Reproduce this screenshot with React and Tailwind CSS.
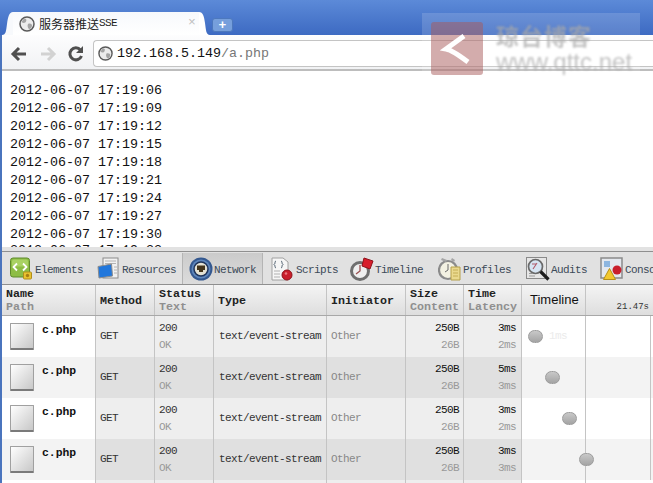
import React from "react";

const mono = "font-['Liberation_Mono','DejaVu_Sans_Mono',monospace]";

const times = ["17:19:06", "17:19:09", "17:19:12", "17:19:15", "17:19:18", "17:19:21", "17:19:24", "17:19:27", "17:19:30", "17:19:33"];

const rows = [
  { time: "3ms", latency: "2ms", dot: "ml-[6px]", faint: true },
  { time: "5ms", latency: "3ms", dot: "ml-[23px]" },
  { time: "3ms", latency: "2ms", dot: "ml-[40px]" },
  { time: "3ms", latency: "3ms", dot: "ml-[57px]" },
];

const Globe = ({ size = 16 }) => (
  <svg width={size} height={size} viewBox="0 0 16 16" className="shrink-0">
    <circle cx="8" cy="8" r="7" fill="#ececec" stroke="#5a5a5a" strokeWidth="1.5" />
    <path d="M5 2.5c2 0 3 1 2 3S4 7 2.5 6M9 8c2-1 4.5 0 4 2s-2 3.5-3 3-2-3-1-5z" fill="#a4a4a4" />
  </svg>
);

const ElementsIcon = () => (
  <svg width="24" height="24" viewBox="0 0 24 24" className="shrink-0">
    <rect x="0.5" y="1" width="19" height="19" rx="2.5" fill="#8dbd45" stroke="#5f8a2c" />
    <rect x="2" y="2.5" width="16" height="7" rx="2" fill="#a9d264" />
    <path d="M7 6.5L3.5 10 7 13.500M13 6.500L16.500 10 13 13.500" fill="none" stroke="#fff" strokeWidth="1.8" />
    <rect x="13.500" y="15" width="8" height="7" rx="1" fill="#e9c22f" stroke="#b08d1c" />
    <circle cx="17.500" cy="18.500" r="1.700" fill="#a87d12" />
  </svg>
);

const ResourcesIcon = () => (
  <svg width="24" height="24" viewBox="0 0 24 24" className="shrink-0">
    <rect x="6" y="1" width="15" height="20" fill="#f1f1f1" stroke="#8c8c8c" />
    <path d="M8 4h11M8 6.500h11" stroke="#b4b4b4" />
    <path d="M1 9.500l13.500-2.500 1 12L2 21z" fill="#2177dc" stroke="#8c8c8c" />
    <path d="M17 10h3M17 13h3M17 16h3" stroke="#b4b4b4" />
  </svg>
);

const NetworkIcon = () => (
  <svg width="24" height="24" viewBox="0 0 24 24" className="shrink-0">
    <circle cx="12" cy="12" r="11.500" fill="#34588f" />
    <circle cx="12" cy="12" r="9.500" fill="#5d86bd" />
    <circle cx="12" cy="12" r="7" fill="#e4e2d4" stroke="#1f345a" strokeWidth="1.500" />
    <path d="M8 8.500h8v4.500h-2v2h-4v-2H8z" fill="#43341c" />
  </svg>
);

const ScriptsIcon = () => (
  <svg width="24" height="24" viewBox="0 0 24 24" className="shrink-0">
    <path d="M1 1h11l5 4v18H1z" fill="#f6f6f6" stroke="#a0a0a0" />
    <path d="M5 4C3.500 4 4.500 7 3 7.500 4.500 8 3.500 11 5 11M10 4c1.500 0 .5 3 2 3.500-1.500.5-.5 3.500-2 3.500" fill="none" stroke="#4a5a6a" />
    <path d="M3 14h6M3 17h6M3 20h6" stroke="#b0b0b0" />
    <circle cx="16" cy="18" r="5" fill="#c91f2c" stroke="#8e1119" />
    <circle cx="15" cy="16.500" r="1.300" fill="#ea7a80" />
  </svg>
);

const TimelineIcon = () => (
  <svg width="24" height="24" viewBox="0 0 24 24" className="shrink-0">
    <circle cx="10" cy="14" r="8.500" fill="#efefef" stroke="#6f6f6f" strokeWidth="3" />
    <path d="M10 8v6l-4 3" fill="none" stroke="#9a5050" strokeWidth="1.300" />
    <path d="M12 9l2-8 9 3-3 8z" fill="#d81e2c" stroke="#8e1119" />
  </svg>
);

const ProfilesIcon = () => (
  <svg width="24" height="24" viewBox="0 0 24 24" className="shrink-0">
    <circle cx="10" cy="13" r="9" fill="#f3f1e2" stroke="#8b8b8b" strokeWidth="2.200" />
    <path d="M4 1l5 2-1 2-5-2zM14 1l3 2-1 2-3-2z" fill="#a4a4a4" />
    <path d="M10 7v6l-3 2" fill="none" stroke="#6a6a6a" />
    <path d="M13 10h9v13h-9z" fill="#ead98d" stroke="#b5a04a" />
    <path d="M15 13h5M15 16h5M15 19h5" stroke="#c4ad55" />
  </svg>
);

const AuditsIcon = () => (
  <svg width="24" height="24" viewBox="0 0 24 24" className="shrink-0">
    <rect x="0.500" y="0.500" width="20" height="21" fill="#e6e6e6" stroke="#8a8a8a" />
    <path d="M3 19h6M3 16.500h3" stroke="#999" />
    <circle cx="9.500" cy="9.500" r="7" fill="#d6e4f2" stroke="#6a6a6a" strokeWidth="1.700" />
    <path d="M7 12l4-6M6 7h4" stroke="#b05a6a" strokeWidth="1.100" />
    <path d="M14.500 14.500L22.500 22.500" stroke="#1d1d1d" strokeWidth="3.200" />
  </svg>
);

const ConsoleIcon = () => (
  <svg width="24" height="24" viewBox="0 0 24 24" className="shrink-0">
    <rect x="1" y="1" width="21" height="20" fill="#e4e8ee" stroke="#8a8a8a" strokeWidth="1.500" />
    <rect x="4" y="4" width="6" height="6" fill="#8db6e0" />
    <path d="M3.500 22.500l6-11 6 11z" fill="#f2c82e" stroke="#b68f18" />
    <circle cx="17" cy="13" r="4.500" fill="#c91f2c" />
  </svg>
);

const tabs = [
  { label: "Elements", icon: <ElementsIcon />, cls: "w-[86px] pl-[10px]" },
  { label: "Resources", icon: <ResourcesIcon />, cls: "w-[96px] pl-[11px]" },
  { label: "Network", icon: <NetworkIcon />, cls: "w-[81px] pl-[6px] bg-gradient-to-b from-[#cbcbcb] to-[#dcdcdc] border-x border-[#b4b4b4]" },
  { label: "Scripts", icon: <ScriptsIcon />, cls: "w-[82px] pl-[8px]" },
  { label: "Timeline", icon: <TimelineIcon />, cls: "w-[88px] pl-[5px]" },
  { label: "Profiles", icon: <ProfilesIcon />, cls: "w-[88px] pl-[5px]" },
  { label: "Audits", icon: <AuditsIcon />, cls: "w-[74px] pl-[5px]" },
  { label: "Console", icon: <ConsoleIcon />, cls: "w-[58px] pl-[5px]" },
];

const cols = "grid grid-cols-[96px_59px_59px_113px_79px_58px_58px_64px_1fr]";
const cellLine = "border-r border-[#c4c4c4]";
const small = "text-[11px] tracking-[-0.6px]";

const HeaderCell = ({ top, bottom, cls = "pl-[4px]" }) => (
  <div className={`flex flex-col justify-center ${cls} pt-[2px] text-[11.67px] leading-[13px] font-bold text-[#222] ${cellLine}`}>
    <span>{top}</span>
    {bottom && <span className="text-[#8f8f8f]">{bottom}</span>}
  </div>
);

const Row = ({ row, odd }) => {
  const tone = odd ? "bg-[#e0e0e0]" : "bg-[#eeeeee]";
  const light = odd ? "bg-[#f3f3f3]" : "bg-white";
  return (
    <div className={`${cols} h-[41px] ${small} text-[#333]`}>
      <div className={`${light} ${cellLine} flex pl-[10px] pt-[7px]`}>
        <div className="w-[24px] h-[27px] bg-gradient-to-br from-white to-[#c8c8c8] border border-[#a0a0a0] border-b-2 border-b-[#7a7a7a] rounded-[1px]" />
        <span className="ml-[8px] text-[11.4px] tracking-normal font-bold text-[#111] leading-[14px]">c.php</span>
      </div>
      <div className={`${tone} ${cellLine} flex items-center px-[4px]`}>GET</div>
      <div className={`${tone} ${cellLine} flex flex-col justify-center px-[4px] leading-[17px]`}>
        <span>200</span>
        <span className="text-[#999]">OK</span>
      </div>
      <div className={`${tone} ${cellLine} flex items-center px-[5px] whitespace-nowrap`}>text/event-stream</div>
      <div className={`${tone} ${cellLine} flex items-center px-[4px] text-[#888]`}>Other</div>
      <div className={`${tone} ${cellLine} flex flex-col justify-center items-end px-[4px] leading-[17px]`}>
        <span className="text-[#111]">250B</span>
        <span className="text-[#999]">26B</span>
      </div>
      <div className={`${tone} ${cellLine} flex flex-col justify-center items-end px-[5px] leading-[17px]`}>
        <span className="text-[#111]">{row.time}</span>
        <span className="text-[#999]">{row.latency}</span>
      </div>
      <div className={`${light} col-span-2 relative flex items-center`}>
        <div className="absolute inset-y-0 left-[63px] w-px bg-[#c4c4c4]" />
        <div className="absolute inset-y-0 left-[128px] w-px bg-[#c4c4c4]" />
        <div className={`${row.dot} relative w-[15px] h-[13px] rounded-full bg-gradient-to-b from-[#c8c8c8] to-[#a4a4a4] border border-[#9c9c9c]`} />
        {row.faint && <span className="ml-[6px] text-[#ebebeb]">1ms</span>}
      </div>
    </div>
  );
};

export default function App() {
  return (
    <div className={`relative w-[653px] h-[483px] overflow-hidden bg-white ${mono}`}>
      {/* tab strip */}
      <div className="h-[35px] bg-gradient-to-b from-[#5c8ad8] to-[#3d6ac2] flex items-end pl-[2px]">
        <svg width="11" height="23" viewBox="0 0 11 23" className="shrink-0">
          <path d="M0 23c4 0 4-4 5-11S7 0 11 0v23z" fill="#f7f9fc" />
        </svg>
        <div className="relative w-[186px] h-[23px] bg-gradient-to-b from-[#f7f9fc] to-white flex items-center pl-[6px]">
          <Globe size={16} />
          <span className="ml-[4px] text-[12px] text-[#222] font-['Noto_Sans_CJK_SC','Liberation_Mono',sans-serif] whitespace-nowrap">服务器推送</span>
          <span className={`${small} text-[#222] whitespace-nowrap`}>SSE</span>
          <span className="absolute left-[175px] top-[4px] text-[13px] leading-[14px] text-[#c0c0c0]">×</span>
        </div>
        <svg width="11" height="23" viewBox="0 0 11 23" className="shrink-0">
          <path d="M0 0c4 0 5 4 6 11s1 12 5 12H0z" fill="#ffffff" />
        </svg>
        <div className="ml-[2px] mb-[3px] w-[21px] h-[14px] bg-[#769fdc] rounded-[3px] border border-[#4d78bd] flex items-center justify-center text-[13px] leading-none font-bold text-white">+</div>
      </div>

      {/* toolbar */}
      <div className="h-[36px] pt-[3px] bg-gradient-to-b from-[#fdfdfe] to-[#f1f2f4] border-b-2 border-[#bdbdbd] flex items-center pl-[10px]">
        <svg width="18" height="18" viewBox="0 0 18 18" className="shrink-0"><path d="M9 3L3 9l6 6M3 9h13" fill="none" stroke="#505050" strokeWidth="3" /></svg>
        <svg width="18" height="18" viewBox="0 0 18 18" className="ml-[11px] shrink-0"><path d="M9 3l6 6-6 6M15 9H2" fill="none" stroke="#d2d2d2" strokeWidth="3" /></svg>
        <svg width="18" height="18" viewBox="0 0 18 18" className="ml-[10px] shrink-0"><path d="M14.500 11a6 6 0 1 1-1-6" fill="none" stroke="#505050" strokeWidth="3" /><path d="M16 1v7h-7z" fill="#505050" /></svg>
        <div className="ml-[8px] flex-1 h-[27px] bg-white border border-[#c4c4c4] border-r-0 rounded-l-[4px] flex items-center pl-[4px]">
          <Globe size={15} />
          <span className="ml-[4px] text-[13.33px] text-[#111]">192.168.5.149<span className="text-[#777]">/a.php</span></span>
        </div>
      </div>

      {/* page */}
      <div className="h-[176px] overflow-hidden bg-white pl-[10px] pt-[11px] text-[13.33px] leading-[18px] text-[#111]">
        {times.map((t, i) => (
          <div key={t} className={i === 9 ? "-mt-[2px]" : ""}>2012-06-07 {t}</div>
        ))}
      </div>

      {/* devtools */}
      <div className="h-[4px] bg-[#e2e2e2]" />
      <div className="h-[34px] pt-[1px] bg-[#e1e1e1] border-y border-[#8f8f8f] flex overflow-hidden">
        {tabs.map((t) => (
          <div key={t.label} className={`${t.cls} shrink-0 flex items-center ${small} text-[#3c4a58] whitespace-nowrap`}>
            {t.icon}
            <span className="ml-[1px] mt-[3px]">{t.label}</span>
          </div>
        ))}
      </div>

      <div className={`${cols} h-[31px] bg-gradient-to-b from-[#f4f4f4] to-[#dedede] border-b border-[#a8a8a8]`}>
        <HeaderCell top="Name" bottom="Path" cls="pl-[6px]" />
        <HeaderCell top="Method" />
        <HeaderCell top="Status" bottom="Text" />
        <HeaderCell top="Type" />
        <HeaderCell top="Initiator" />
        <HeaderCell top="Size" bottom="Content" />
        <HeaderCell top="Time" bottom="Latency" />
        <div className={`${cellLine} flex items-center pl-[8px] text-[13px] text-[#111] font-['Liberation_Sans',sans-serif]`}>Timeline</div>
        <div className="flex items-end justify-end pr-[4px] pb-px text-[9px] text-[#333]">21.47s</div>
      </div>

      {rows.map((row, i) => (
        <Row key={i} row={row} odd={i % 2 === 1} />
      ))}

      {/* start of the next row */}
      <div className={`${cols} h-[3px]`}>
        <div className={`bg-white ${cellLine}`} />
        <div className={`bg-[#eeeeee] ${cellLine}`} />
        <div className={`bg-[#eeeeee] ${cellLine}`} />
        <div className={`bg-[#eeeeee] ${cellLine}`} />
        <div className={`bg-[#eeeeee] ${cellLine}`} />
        <div className={`bg-[#eeeeee] ${cellLine}`} />
        <div className={`bg-[#eeeeee] ${cellLine}`} />
        <div className={`bg-white ${cellLine}`} />
        <div className="bg-white" />
      </div>

      {/* window edge */}
      <div className="absolute left-0 top-[35px] bottom-0 w-[2px] bg-[#4a74bd]" />

      {/* watermark */}
      <div className="absolute left-[422px] top-[13px] w-[218px] h-[62px] bg-white/15 flex pl-[9px] pt-[9px]">
        <div className="w-[52px] h-[53px] rounded-[3px] bg-[#a85a5a]/50 flex items-center justify-center blur-[0.4px]">
          <svg width="34" height="34" viewBox="0 0 34 34"><path d="M24 4L6 17c6 1 14 7 22 13" fill="none" stroke="#fff" strokeWidth="5" /></svg>
        </div>
        <div className="ml-[13px] text-[#a8a8a8]/70 font-bold blur-[0.8px] whitespace-nowrap">
          <div className="text-[23px] leading-[27px] tracking-[1px] font-['Noto_Sans_CJK_SC',sans-serif]">琼台博客</div>
          <div className="text-[24px] leading-[26px] font-normal font-['Liberation_Sans',sans-serif]">www.qttc.net</div>
        </div>
      </div>
    </div>
  );
}
